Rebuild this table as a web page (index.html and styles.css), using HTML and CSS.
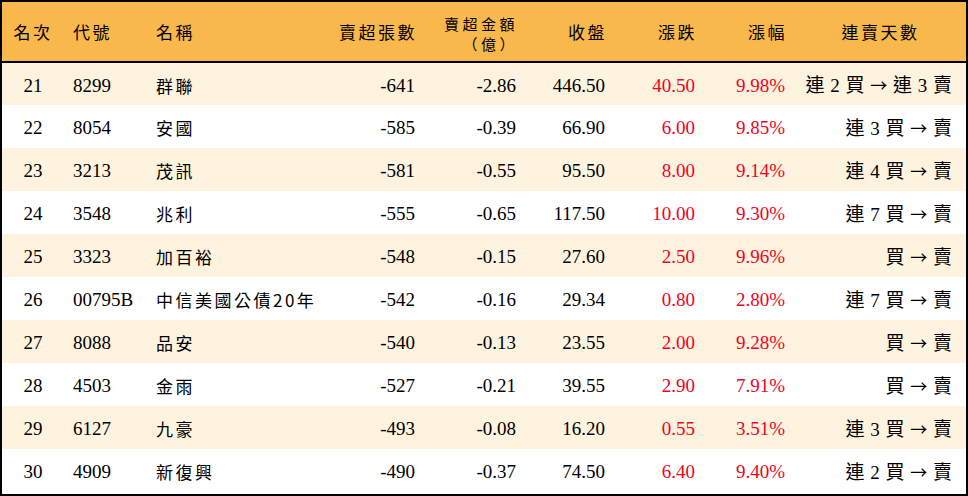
FILE: index.html
```html
<!DOCTYPE html>
<html lang="zh-Hant">
<head>
<meta charset="utf-8">
<title>賣超排行</title>
<link rel="stylesheet" href="styles.css">
</head>
<body>
<div class="frame">
<table class="rank">
<colgroup>
<col class="c-rank"><col class="c-code"><col class="c-name"><col class="c-vol"><col class="c-amt"><col class="c-close"><col class="c-chg"><col class="c-pct"><col class="c-days">
</colgroup>
<thead>
<tr>
<th class="ctr">名次</th>
<th class="lft">代號</th>
<th class="lft nm">名稱</th>
<th class="rgt">賣超張數</th>
<th class="rgt two"><span class="l1">賣超金額</span><span class="l2">（億）</span></th>
<th class="rgt">收盤</th>
<th class="rgt">漲跌</th>
<th class="rgt">漲幅</th>
<th class="ctr">連賣天數</th>
</tr>
</thead>
<tbody>
<tr><td class="ctr">21</td><td class="lft">8299</td><td class="lft nm">群聯</td><td class="rgt">-641</td><td class="rgt">-2.86</td><td class="rgt">446.50</td><td class="rgt up">40.50</td><td class="rgt up">9.98%</td><td class="rgt days">連 2 買 <span class="ar">→</span> 連 3 賣</td></tr>
<tr><td class="ctr">22</td><td class="lft">8054</td><td class="lft nm">安國</td><td class="rgt">-585</td><td class="rgt">-0.39</td><td class="rgt">66.90</td><td class="rgt up">6.00</td><td class="rgt up">9.85%</td><td class="rgt days">連 3 買 <span class="ar">→</span> 賣</td></tr>
<tr><td class="ctr">23</td><td class="lft">3213</td><td class="lft nm">茂訊</td><td class="rgt">-581</td><td class="rgt">-0.55</td><td class="rgt">95.50</td><td class="rgt up">8.00</td><td class="rgt up">9.14%</td><td class="rgt days">連 4 買 <span class="ar">→</span> 賣</td></tr>
<tr><td class="ctr">24</td><td class="lft">3548</td><td class="lft nm">兆利</td><td class="rgt">-555</td><td class="rgt">-0.65</td><td class="rgt">117.50</td><td class="rgt up">10.00</td><td class="rgt up">9.30%</td><td class="rgt days">連 7 買 <span class="ar">→</span> 賣</td></tr>
<tr><td class="ctr">25</td><td class="lft">3323</td><td class="lft nm">加百裕</td><td class="rgt">-548</td><td class="rgt">-0.15</td><td class="rgt">27.60</td><td class="rgt up">2.50</td><td class="rgt up">9.96%</td><td class="rgt days">買 <span class="ar">→</span> 賣</td></tr>
<tr><td class="ctr">26</td><td class="lft">00795B</td><td class="lft nm">中信美國公債20年</td><td class="rgt">-542</td><td class="rgt">-0.16</td><td class="rgt">29.34</td><td class="rgt up">0.80</td><td class="rgt up">2.80%</td><td class="rgt days">連 7 買 <span class="ar">→</span> 賣</td></tr>
<tr><td class="ctr">27</td><td class="lft">8088</td><td class="lft nm">品安</td><td class="rgt">-540</td><td class="rgt">-0.13</td><td class="rgt">23.55</td><td class="rgt up">2.00</td><td class="rgt up">9.28%</td><td class="rgt days">買 <span class="ar">→</span> 賣</td></tr>
<tr><td class="ctr">28</td><td class="lft">4503</td><td class="lft nm">金雨</td><td class="rgt">-527</td><td class="rgt">-0.21</td><td class="rgt">39.55</td><td class="rgt up">2.90</td><td class="rgt up">7.91%</td><td class="rgt days">買 <span class="ar">→</span> 賣</td></tr>
<tr><td class="ctr">29</td><td class="lft">6127</td><td class="lft nm">九豪</td><td class="rgt">-493</td><td class="rgt">-0.08</td><td class="rgt">16.20</td><td class="rgt up">0.55</td><td class="rgt up">3.51%</td><td class="rgt days">連 3 買 <span class="ar">→</span> 賣</td></tr>
<tr><td class="ctr">30</td><td class="lft">4909</td><td class="lft nm">新復興</td><td class="rgt">-490</td><td class="rgt">-0.37</td><td class="rgt">74.50</td><td class="rgt up">6.40</td><td class="rgt up">9.40%</td><td class="rgt days">連 2 買 <span class="ar">→</span> 賣</td></tr>
</tbody>
</table>
</div>
</body>
</html>
```
FILE: styles.css
```css
html, body {
  margin: 0;
  padding: 0;
  background: #000;
}
.frame {
  width: 968px;
  height: 496px;
  box-sizing: border-box;
  border: 2px solid #000;
  background: #fff;
  overflow: hidden;
}
.rank {
  width: 964px;
  border-collapse: collapse;
  table-layout: fixed;
  font-family: "Liberation Serif", "Noto Sans CJK TC", serif;
  font-size: 19px;
  color: #000;
}
.c-rank { width: 62px; }
.c-code { width: 86px; }
.c-name { width: 180px; }
.c-vol { width: 95px; }
.c-amt { width: 101px; }
.c-close { width: 89px; }
.c-chg { width: 90px; }
.c-pct { width: 90px; }
.c-days { width: 171px; }
thead tr {
  height: 60px;
  background: #f9b84b;
  border-bottom: 2px solid #000;
}
th {
  font-family: "Noto Sans CJK TC", sans-serif;
  font-weight: normal;
  font-size: 17px;
  letter-spacing: 2.5px;
  line-height: 20px;
  padding: 0;
  white-space: nowrap;
}
th.two {
  padding-top: 2px;
  font-size: 15px;
  letter-spacing: 3.5px;
  line-height: 22px;
}
.l1, .l2 {
  display: block;
  height: 20px;
  line-height: 22px;
}
tbody tr {
  height: 43px;
}
tbody tr:nth-child(odd) {
  background: #fdf3df;
}
td {
  padding: 0;
  padding-top: 3px;
  line-height: 22px;
  white-space: nowrap;
}
.ctr { text-align: center; }
.lft { text-align: left; padding-left: 9px; }
.lft.nm { padding-left: 6px; }
td.nm {
  font-family: "Noto Sans CJK TC", sans-serif;
  font-size: 17px;
  letter-spacing: 2.5px;
}
.rgt { text-align: right; padding-right: 10px; }
th.rgt { padding-right: 8px; }
.up { color: #f5001e; }
td.days {
  padding-right: 14px;
  word-spacing: 1px;
}
.ar {
  font-family: "Noto Sans CJK TC", sans-serif;
  font-size: 17px;
}
```
